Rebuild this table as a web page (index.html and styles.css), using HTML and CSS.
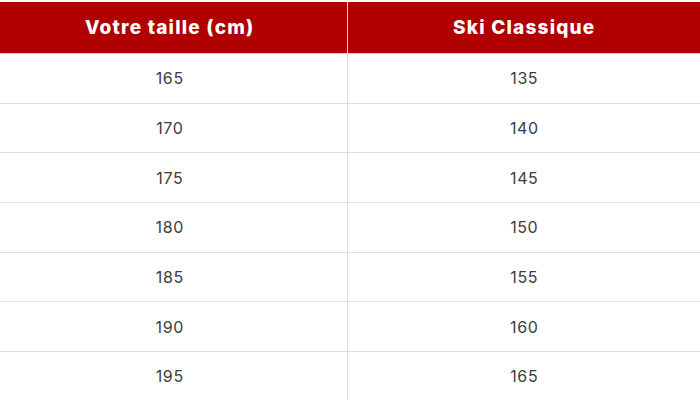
FILE: index.html
```html
<!DOCTYPE html>
<html lang="fr">
<head>
<meta charset="utf-8">
<link rel="stylesheet" href="styles.css">
</head>
<body>
<div class="wrap">
<table class="size-table">
  <thead>
    <tr><th>Votre taille (cm)</th><th>Ski Classique</th></tr>
  </thead>
  <tbody>
    <tr><td>165</td><td>135</td></tr>
    <tr><td>170</td><td>140</td></tr>
    <tr><td>175</td><td>145</td></tr>
    <tr><td>180</td><td>150</td></tr>
    <tr><td>185</td><td>155</td></tr>
    <tr><td>190</td><td>160</td></tr>
    <tr><td>195</td><td>165</td></tr>
  </tbody>
</table>
</div>
</body>
</html>
```
FILE: styles.css
```css
html, body {
  margin: 0;
  padding: 0;
  background: #fff;
  overflow: hidden;
}
.wrap {
  padding-top: 2px;
  margin-left: -7px;
  width: 708px;
}
.size-table {
  width: 708px;
  border-collapse: collapse;
  table-layout: fixed;
  font-family: Inter, "Noto Sans", sans-serif;
}
.size-table th {
  background: #b00000;
  color: #fff;
  font-weight: 800;
  font-size: 19px;
  letter-spacing: 1.2px;
  height: 51px;
  padding: 0;
  text-align: center;
  border-right: 1px solid #f0d0d0;
  border-bottom: 1px solid #f3c8c8;
}
.size-table th:last-child { border-right: none; }
.size-table td {
  height: 48.7px;
  padding: 0;
  text-align: center;
  color: #3c3c3c;
  font-size: 16px;
  font-weight: 400;
  letter-spacing: 0.6px;
  border-bottom: 1px solid #dedede;
  border-right: 1px solid #dedede;
}
.size-table td:last-child { border-right: none; }
```
